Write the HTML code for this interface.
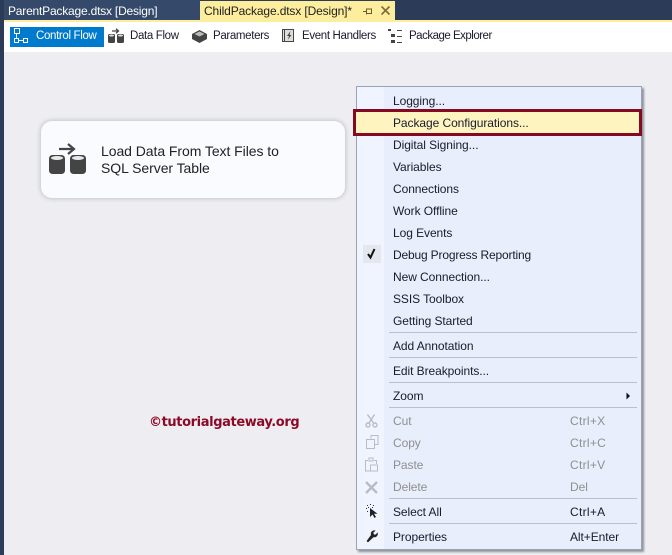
<!DOCTYPE html>
<html><head><meta charset="utf-8"><style>
html,body{margin:0;padding:0;width:672px;height:555px;overflow:hidden;background:#eeeef2}
body{position:relative;font-family:"Liberation Sans",sans-serif;font-size:12px;color:#1e1e1e}
.a{position:absolute}
.t{position:absolute;white-space:nowrap;line-height:16px;letter-spacing:-.07px}
.b{font-size:11.5px;letter-spacing:-.34px}
.m{color:#1a1a2e}
.d{color:#8f8f8f}
.s{position:absolute;left:389px;width:248px;height:1px;background:#bcc0cc}
svg{position:absolute;overflow:visible}
</style></head><body>
<div class="a" style="left:0;top:0;width:672px;height:22px;background:#2b3b58"></div>
<div class="a" style="left:0;top:0;width:4px;height:555px;background:#2b3b58"></div>
<div class="a" style="left:4px;top:0;width:196px;height:20px;background:#35496a"></div>
<div class="a" style="left:200px;top:1px;width:195px;height:21px;background:#fdee9e"></div>
<div class="a" style="left:4px;top:20px;width:668px;height:2px;background:#fdee9e"></div>
<div class="a" style="left:4px;top:22px;width:668px;height:30px;background:#fff"></div>
<div class="t" style="left:8px;top:3px;color:#fff;letter-spacing:-.2px">ParentPackage.dtsx [Design]</div>
<div class="t" style="left:204px;top:3px;color:#1e1e1e;letter-spacing:-.13px">ChildPackage.dtsx [Design]*</div>
<svg style="left:362px;top:6px" width="12" height="12" fill="none" stroke="#6b5a30"><path d="M1 5.500H4M4.500 2.500V8.500M4.500 3H9.500V7.500H4.500"/></svg>
<svg style="left:380px;top:5px" width="12" height="12" fill="none" stroke="#7d6a3a" stroke-width="1.600"><path d="M1.500 1.500L9.500 9.500M9.500 1.500L1.500 9.500"/></svg>

<div class="a" style="left:10px;top:27px;width:94px;height:20px;background:#007acc"></div>
<svg style="left:13px;top:28px" width="17" height="17" fill="none" stroke="#fff"><rect x="1.500" y="0.500" width="5" height="5"/><rect x="1.500" y="10.500" width="4" height="4"/><rect x="10.500" y="10.500" width="4" height="4"/><path d="M3.500 6V10M6 12.500H10"/></svg>
<div class="t b" style="left:36px;top:28px;color:#fff">Control Flow</div>

<svg style="left:108px;top:28px" width="16" height="15"><path d="M4 3H10M8 0.800L10.500 3L8 5.200" fill="none" stroke="#444" stroke-width="1.300"/><rect x="0" y="6" width="7" height="9" rx="1.500" fill="#444"/><rect x="9" y="6" width="7" height="9" rx="1.500" fill="#444"/><ellipse cx="3.500" cy="7.500" rx="2.500" ry="1" fill="#ddd"/><ellipse cx="12.500" cy="7.500" rx="2.500" ry="1" fill="#ddd"/></svg>
<div class="t m b" style="left:130px;top:28px">Data Flow</div>

<svg style="left:192px;top:30px" width="15" height="13"><path d="M0 4L7.500 0L15 4V9L7.500 13L0 9Z" fill="#444"/><path d="M2.500 4L7.500 1.500L12.500 4L7.500 6.500Z" fill="#bbb"/></svg>
<div class="t m b" style="left:213px;top:28px">Parameters</div>

<svg style="left:282px;top:29px" width="12" height="13"><rect x="0.500" y="0.500" width="11" height="12" fill="#ddd" stroke="#444"/><path d="M2.500 1V13" stroke="#444"/><path d="M8.500 2L5 7H7L6 10.500L9.500 6H7.500Z" fill="#444"/></svg>
<div class="t m b" style="left:302px;top:28px">Event Handlers</div>

<svg style="left:388px;top:29px" width="14" height="14" fill="#444"><rect x="0" y="0" width="3" height="2"/><rect x="3" y="5" width="4" height="3"/><rect x="3" y="11" width="4" height="3"/><rect x="9" y="1" width="5" height="1"/><rect x="9" y="7" width="5" height="1"/><rect x="9" y="13" width="5" height="1"/></svg>
<div class="t m b" style="left:409px;top:28px;letter-spacing:-.5px">Package Explorer</div>

<div class="a" style="left:41px;top:121px;width:304px;height:77px;background:#fafbff;border-radius:11px;box-shadow:0 0 4px 1px #c4c5c9"></div>
<svg style="left:48px;top:143px" width="40" height="33"><path d="M11 6H26M20 1L26 6L20 11" fill="none" stroke="#444" stroke-width="2.200"/><rect x="1" y="12" width="16" height="19" rx="3.500" fill="#444"/><rect x="22" y="12" width="16" height="19" rx="3.500" fill="#444"/><ellipse cx="9" cy="15" rx="6" ry="2" fill="#e8e8e8"/><ellipse cx="30" cy="15" rx="6" ry="2" fill="#e8e8e8"/></svg>
<div class="t" style="left:101px;top:143px;font-size:14px;line-height:17px;color:#222;letter-spacing:-.06px">Load Data From Text Files to<br>SQL Server Table</div>

<div class="t" style="left:149px;top:414px;font-size:13px;font-weight:bold;color:#8c0a28;line-height:17px;font-family:'DejaVu Sans',sans-serif;letter-spacing:-.39px">©tutorialgateway.org</div>

<div class="a" style="left:356px;top:86px;width:284px;height:462px;background:#e8eefc;border:1px solid #9aa3b5;box-shadow:2px 2px 2px #8f9298"></div>
<div class="a" style="left:357px;top:87px;width:27px;height:462px;background:#f0f4fe"></div>
<div class="a" style="left:353px;top:109px;width:283px;height:21px;background:#fdf4bf;border:3px solid #840a24"></div>
<div class="a" style="left:363px;top:245px;width:18px;height:18px;background:#e4e8ee"></div>
<svg style="left:366px;top:248px" width="12" height="12" fill="none" stroke="#111" stroke-width="2"><path d="M2 6L4.500 9.500L8.500 1"/></svg>

<div class="t m" style="left:393px;top:93px">Logging...</div>
<div class="t m" style="left:393px;top:115px">Package Configurations...</div>
<div class="t m" style="left:393px;top:137px">Digital Signing...</div>
<div class="t m" style="left:393px;top:159px">Variables</div>
<div class="t m" style="left:393px;top:181px">Connections</div>
<div class="t m" style="left:393px;top:203px">Work Offline</div>
<div class="t m" style="left:393px;top:225px">Log Events</div>
<div class="t m" style="left:393px;top:247px;letter-spacing:-.17px">Debug Progress Reporting</div>
<div class="t m" style="left:393px;top:269px">New Connection...</div>
<div class="t m" style="left:393px;top:291px">SSIS Toolbox</div>
<div class="t m" style="left:393px;top:313px">Getting Started</div>
<div class="s" style="top:332px"></div>
<div class="t m" style="left:393px;top:338px">Add Annotation</div>
<div class="s" style="top:357px"></div>
<div class="t m" style="left:393px;top:363px">Edit Breakpoints...</div>
<div class="s" style="top:382px"></div>
<div class="t m" style="left:393px;top:388px">Zoom</div>
<svg style="left:626px;top:392px" width="5" height="8"><path d="M0.500 0.500L4 4L0.500 7.500Z" fill="#111"/></svg>
<div class="s" style="top:407px"></div>
<div class="t d" style="left:393px;top:413px">Cut</div><div class="t d" style="left:570px;top:413px;letter-spacing:.3px">Ctrl+X</div>
<div class="t d" style="left:393px;top:435px">Copy</div><div class="t d" style="left:570px;top:435px;letter-spacing:.3px">Ctrl+C</div>
<div class="t d" style="left:393px;top:457px">Paste</div><div class="t d" style="left:570px;top:457px;letter-spacing:.3px">Ctrl+V</div>
<div class="t d" style="left:393px;top:479px">Delete</div><div class="t d" style="left:570px;top:479px">Del</div>
<div class="s" style="top:498px"></div>
<div class="t m" style="left:393px;top:504px">Select All</div><div class="t m" style="left:570px;top:504px;letter-spacing:.3px">Ctrl+A</div>
<div class="s" style="top:523px"></div>
<div class="t m" style="left:393px;top:529px">Properties</div><div class="t m" style="left:570px;top:529px">Alt+Enter</div>

<svg style="left:365px;top:414px" width="14" height="14" fill="none" stroke="#b8bcc4" stroke-width="1.400"><path d="M2.500 0.500L8.500 9M9.500 0.500L4 9"/><circle cx="3" cy="11" r="2"/><circle cx="10" cy="11" r="2"/></svg>
<svg style="left:366px;top:435px" width="13" height="15" fill="none" stroke="#b8bcc4"><path d="M5 3.500V0.500H12V9.500H9"/><rect x="0.500" y="4.500" width="8" height="9"/></svg>
<svg style="left:365px;top:457px" width="14" height="15" fill="none" stroke="#b8bcc4"><path d="M3 3.500H0.500V14H6M9 3.500H11.500V7"/><rect x="4" y="1" width="4" height="3"/><rect x="5.500" y="8" width="7" height="6"/></svg>
<svg style="left:365px;top:481px" width="14" height="13" fill="none" stroke="#b8bcc4" stroke-width="2.400"><path d="M1 1L12 12M12 1L1 12"/></svg>
<svg style="left:366px;top:504px" width="13" height="15"><path d="M4 4L4 13L6.500 10.500L8.500 14L10 13L8 9.800H11.500Z" fill="#222"/><path d="M1 1H2V2H1ZM4 0H5V1H4ZM7 1H8V2H7ZM0 4H1V5H0ZM2 3H3V4H2ZM1 7H2V8H1ZM6 3H7V4H6Z" fill="#333"/></svg>
<svg style="left:366px;top:530px" width="13" height="13"><path d="M1 11L2 12L7.500 6.800C9.500 7.500 11.800 6 11.500 3L9.500 5L7.500 4.500L7 2.500L9 0.800C6.500 0.200 4.500 2.500 5.300 5Z" fill="#222" stroke="#222" stroke-width=".6"/></svg>
</body></html>
